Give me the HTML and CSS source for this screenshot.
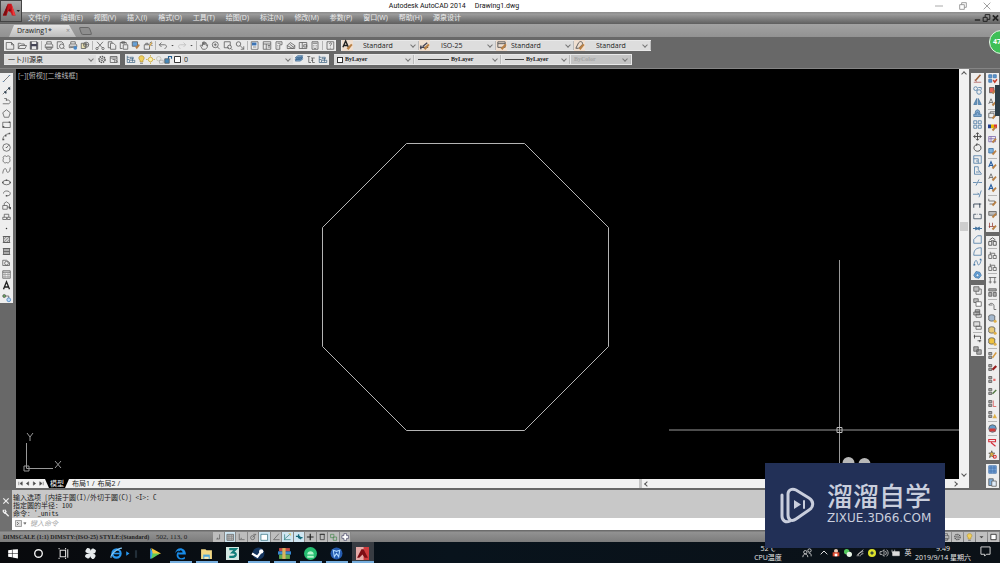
FILE: index.html
```html
<!DOCTYPE html>
<html lang="zh-CN">
<head>
<meta charset="utf-8">
<meta name="viewport" content="width=device-width, initial-scale=1">
<title>Autodesk AutoCAD 2014 Drawing1.dwg</title>
<link rel="stylesheet" href="styles.css">
</head>
<body>
<header class="titlebar">
  <h1 class="title"><span>Autodesk AutoCAD 2014</span><span>Drawing1.dwg</span></h1>
  <div class="window-controls" data-tools="winmin winrestore winclose"></div>
</header>
<button class="app-button" aria-label="应用程序菜单">
  <svg viewBox="0 0 22 22"><path d="M2 16 7.500 3h4L16 16h-4l-1-3-3-2-2 5z" fill="#c4161c"/><path d="M7.500 3 6 16H2zM10 8l1 3H8z" fill="#7e0c10"/><path d="m11.500 3 4.500 13-3-1z" fill="#ee3a3a"/><path d="M17 10h4l-2 2z" fill="#222"/></svg>
</button>
<nav class="menubar">
  <button>文件(F)</button><button>编辑(E)</button><button>视图(V)</button><button>插入(I)</button><button>格式(O)</button><button>工具(T)</button><button>绘图(D)</button><button>标注(N)</button><button>修改(M)</button><button>参数(P)</button><button>窗口(W)</button><button>帮助(H)</button><button>源泉设计</button>
  <div class="mdi-controls" data-tools="mdimin mdirestore mdiclose"></div>
</nav>
<div class="tabbar">
  <div class="doc-tab"><span>Drawing1*</span><button aria-label="关闭">×</button></div>
  <button class="new-tab" aria-label="新建选项卡"></button>
</div>
<div class="toolbars">
  <div class="toolbar-row">
    <div class="toolbar" data-tools="new open save | print preview publish web | cut copy paste match block | undo caret redo caret | pan zoom zoomwin zoomprev | props center palette sheet markup calc | help"></div>
    <div class="toolbar styles">
      <span class="style-icon" data-icon="textstyle"></span>
      <label class="pick w-text"><select aria-label="文字样式"><option>Standard</option></select></label>
      <span class="style-icon" data-icon="dimstyle"></span>
      <label class="pick w-dim"><select aria-label="标注样式"><option>ISO-25</option></select></label>
      <span class="style-icon" data-icon="tablestyle"></span>
      <label class="pick w-table"><select aria-label="表格样式"><option>Standard</option></select></label>
      <span class="style-icon" data-icon="leaderstyle"></span>
      <label class="pick w-leader"><select aria-label="多重引线样式"><option>Standard</option></select></label>
    </div>
  </div>
  <div class="toolbar-row">
    <div class="toolbar workspace">
      <label class="pick w-space"><select aria-label="工作空间"><option>一卜川源泉</option></select></label>
      <span class="tools" data-tools="gear wsave"></span>
    </div>
    <div class="toolbar layers">
      <span class="tools" data-tools="layers"></span>
      <span class="layer-state" data-tools="bulb sun freeze lock white"></span>
      <label class="pick w-layer"><select aria-label="图层"><option>0</option></select></label>
      <span class="tools" data-tools="stack layerprev layers"></span>
    </div>
    <div class="toolbar properties">
      <label class="pick serif w-color"><i class="swatch"></i><select aria-label="颜色"><option>ByLayer</option></select></label>
      <label class="pick serif w-line"><i class="rule long"></i><select aria-label="线型"><option>ByLayer</option></select></label>
      <label class="pick serif w-weight"><i class="rule"></i><select aria-label="线宽"><option>ByLayer</option></select></label>
      <label class="pick serif w-plot"><select aria-label="打印样式" disabled><option>ByColor</option></select></label>
    </div>
  </div>
</div>
<main class="workspace-area">
  <aside class="dock dock-left">
    <div class="palette draw" data-tools="line xline pline polygon rect arc circle cloud spline ellipse earc insert mkblock point hatch gradient region table text addsel"></div>
  </aside>
  <section class="view">
    <div class="view-top">
      <div class="canvas">
        <div class="view-label">[−][俯视][二维线框]</div>
        <svg class="drawing" viewBox="0 0 943 409" preserveAspectRatio="xMinYMin meet" aria-label="八边形">
          <g fill="none" stroke="#c8c8c8">
            <path d="M390.500 74.500h118l84 84v119l-84 84h-118l-84-84v-119z" stroke-width=".9"/>
            <path d="M823.500 191v218M653 361h290" stroke="#999"/>
            <path d="M821 358.500h5v5h-5z" stroke="#bbb"/>
            <path d="M10.500 374v25.500H37M8 397h5v5H8zM11 364l3 4 3-4M14 368v4M39 392l6 7M45 392l-6 7" stroke="#999"/>
          </g>
          <circle cx="832.500" cy="394" r="6" fill="#b8b8b8"/><circle cx="848.500" cy="395" r="6" fill="#b8b8b8"/>
        </svg>
      </div>
      <div class="vscroll"><button aria-label="向上" class="arrow up"></button><i class="thumb"></i><button aria-label="向下" class="arrow down"></button></div>
    </div>
    <div class="layout-row">
      <div class="layout-nav" data-tools="first prev next last"></div>
      <button class="layout-tab active">模型</button><button class="layout-tab">布局1</button><button class="layout-tab">布局2</button>
      <div class="hscroll"><button aria-label="向左" class="arrow left"></button><button aria-label="向右" class="arrow right"></button></div>
    </div>
  </section>
  <aside class="dock dock-right">
    <div class="dock-col">
      <div class="palette modify" data-tools="erase copyobj mirror offset array move rotate scale stretch trim extend breakpt break join chamfer fillet blend explode"></div>
      <div class="palette order" data-tools="front back above under | textfront hatchback"></div>
    </div>
    <div class="dock-col">
      <div class="palette express" data-tools="bluegrid redtool abrush | boxbrush colorbar gridbrush bluebrush | abluebrush abrush abluebrush | keybrush greybrush redbrush"></div>
      <div class="palette refs" data-tools="dimbox | dimtree dimtree | dimrow dimlist | leader disk yellowdisk yellowball | pencil redpen reddot greenpen redpair warn | globe | redmark star"></div>
      <div class="palette grids" data-tools="bluetable pages"></div>
    </div>
    <div class="side-handle"></div>
  </aside>
</main>
<section class="command">
  <div class="command-side" data-tools="cmdclose wrench"></div>
  <div class="command-body">
    <div class="history"><p>输入选项 [内接于圆(I)/外切于圆(C)] &lt;I&gt;: C</p><p>指定圆的半径: 100</p><p>命令: '_units</p></div>
    <label class="prompt"><span data-icon="prompt"></span><input type="text" placeholder="键入命令" aria-label="命令"></label>
  </div>
</section>
<div class="statusbar">
  <span class="dims">DIMSCALE (1:1) DIMSTY:(ISO-25) STYLE:(Standard)</span>
  <span class="coords">502, 113, 0</span>
  <div class="toggles" data-tools="infer snap! grid ortho polar! angle track! dyn! plus lwt quick add"></div>
  <div class="status-right" data-tools="printer gear bulb caret white"></div>
</div>
<footer class="taskbar">
  <nav class="apps" data-tools="windows cortana taskview fan ie video edge folder max steam winrar android wps acad"></nav>
  <div class="tray">
    <div class="stack temp"><span>52℃</span><span>CPU温度</span></div>
    <div class="tray-icons" data-tools="people up redman wechat wifi nod speaker battery"></div>
    <span class="ime">英</span>
    <div class="stack clock"><span>9:49</span><span>2019/9/14 星期六</span></div>
    <div class="notice" data-tools="note"></div>
  </div>
</footer>
<button class="bubble" aria-label="加速球">47</button>
<div class="watermark">
  <svg viewBox="0 0 36 38" fill="none" stroke="#c9cedd" stroke-width="3" stroke-linecap="round"><path d="M3 8v21c0 5 4 7 8 5"/><path d="M9 7c0-4 4-6 8-4l13 8c5 3 5 9 0 12L17 32c-4 3-8 1-8-4z"/><path d="m15 13 7 4.500-7 4.500z" fill="#c9cedd" stroke="none"/><path d="M25 14v7" stroke-width="2"/></svg>
  <div class="brand"><strong>溜溜自学</strong><span>ZIXUE.3D66.COM</span></div>
</div>
<script src="app.js"></script>
</body>
</html>
```

FILE: styles.css
```css
* { box-sizing: border-box; }
body { margin: 0; min-height: 100vh; display: flex; flex-direction: column; position: relative; overflow: hidden; background: #686868; color: #222; font: 7px/10px "Open Sans", "Noto Sans CJK SC", sans-serif; }
button, input, select { font: inherit; color: inherit; margin: 0; padding: 0; border: 0; background: none; }
button svg, span svg { display: block; width: 100%; height: 100%; }
svg { overflow: visible; }
h1, p { margin: 0; font: inherit; }

.titlebar { display: flex; height: 12px; background: #fff; align-items: center; }
.title { flex: 1; display: flex; justify-content: center; gap: 9px; color: #111; font-family: Roboto, sans-serif; }
.window-controls { display: flex; width: 92px; padding: 0 1px 0 19px; }
.window-controls button { flex: 1; height: 10px; padding: 1px 8px; }
.app-button { position: absolute; left: 0; top: 0; width: 22px; height: 22px; background: linear-gradient(#a8a8a8, #777); border: 1px solid #444; z-index: 2; }

.menubar { display: flex; height: 12px; padding-left: 28px; gap: 11px; align-items: center; background: linear-gradient(#8c8c8c, #9a9a9a 20%, #5e5e5e); color: #eee; }
.menubar > button { white-space: nowrap; }
.mdi-controls { display: flex; margin-left: auto; }
.mdi-controls button { width: 9px; height: 8px; }

.tabbar { display: flex; height: 13px; padding-left: 9px; gap: 4px; background: linear-gradient(#a2a2a2, #929292); align-items: flex-end; }
.doc-tab { display: flex; width: 67px; height: 12px; padding: 0 6px 0 8px; justify-content: space-between; align-items: center; background: linear-gradient(#e4e4e4, #bcbcbc); clip-path: polygon(5px 0, 60px 0, 100% 100%, 0 100%); }
.doc-tab button { color: #888; }
.new-tab { width: 11px; height: 8px; margin-bottom: 2px; border: 1px solid #666; background: #8e8e8e; transform: skewX(20deg); border-radius: 2px; }

.toolbars { display: flex; flex-direction: column; gap: 3px; padding: 3px 4px; height: 32px; border-bottom: 1px solid #858585; }
.toolbar-row { display: flex; gap: 5px; }
.toolbar { display: flex; height: 11px; align-items: center; background: #e9e9e9; }
.toolbar button { width: 12px; height: 11px; padding: 1px; flex: none; }
.toolbar .caret { width: 7px; }
.sep { flex: none; width: 1px; height: 9px; margin: 0 1px; background: #b5b5b5; }
.tools, .layer-state { display: flex; }
.layer-state button { width: 9px; padding: 1px 0; }
.styles { padding-left: 1px; }
.style-icon { width: 11px; height: 11px; flex: none; background: #f0dfd0; }
.pick { display: flex; align-items: center; position: relative; height: 9px; background: #ddd; }
.pick select { appearance: none; flex: 1; min-width: 0; height: 9px; line-height: 9px; }
.pick::after { content: ""; position: absolute; right: 3px; top: 2px; width: 3px; height: 3px; border: solid #777; border-width: 0 1px 1px 0; transform: rotate(45deg); }
.styles .pick { border-right: 1px solid #bbb; }
.w-text { width: 66px; padding-left: 10px; }
.w-dim { width: 66px; padding-left: 11px; }
.w-table { width: 67px; padding-left: 4px; }
.w-leader { width: 66px; padding-left: 11px; }
.workspace { width: 116px; }
.w-space { flex: 1; padding-left: 4px; }
.layers { width: 204px; }
.w-layer { flex: 1; padding-left: 2px; }
.properties { width: 298px; }
.serif { font: bold 6px/9px "Liberation Serif", serif; gap: 2px; padding-left: 3px; margin-right: 1px; border-right: 1px solid #bbb; }
.w-color { width: 80px; } .w-line { width: 86px; } .w-weight { width: 68px; }
.w-plot { flex: 1; background: #c4c4c4; color: #999; }
.swatch { flex: none; width: 6px; height: 6px; border: 1px solid #333; background: #fff; }
.rule { flex: none; width: 19px; height: 1px; background: #444; }
.rule.long { width: 31px; }

.workspace-area { flex: 1; display: flex; min-height: 0; }
.dock { padding-top: 4px; background: #686868; }
.dock-left { width: 16px; padding-right: 3px; }
.palette { display: flex; flex-direction: column; justify-content: space-between; background: #eee; }
.palette button { height: 11px; padding: 1px; flex: none; }
.palette .sep { width: 9px; height: 1px; margin: 0 auto; }
.draw { height: 230px; }
.view { flex: 1; display: flex; flex-direction: column; min-width: 0; }
.view-top { flex: 1; display: flex; min-height: 0; }
.canvas { flex: 1; position: relative; background: #000; overflow: hidden; }
.view-label { padding: 2px; color: #bbb; }
.drawing { position: absolute; inset: 0; width: 100%; height: 100%; }
.vscroll { width: 10px; display: grid; grid-template-rows: 10px 3fr 9px 5fr 10px; justify-items: center; background: #f1f1f1; }
.thumb { grid-row: 3; width: 8px; background: #cdcdcd; }
.arrow { width: 9px; height: 10px; display: grid; place-items: center; }
.arrow::before { content: ""; width: 3px; height: 3px; border: solid #555; border-width: 1px 0 0 1px; transform: rotate(45deg); }
.down { grid-row: 5; }
.down::before { transform: rotate(225deg); }
.left::before { transform: rotate(-45deg); }
.right::before { transform: rotate(135deg); }
.layout-row { display: flex; height: 9px; background: #f1f1f1; line-height: 9px; align-items: center; }
.layout-nav { display: flex; padding-left: 1px; width: 29px; }
.layout-nav button { flex: 1; height: 7px; }
.layout-tab { height: 9px; padding-left: 3px; color: #222; white-space: nowrap; }
.layout-tab::after { content: "/"; padding-left: 2px; }
.layout-tab.active { padding: 0 5px; background: #000; color: #eee; clip-path: polygon(0 0, 100% 0, 20px 100%, 4px 100%); }
.layout-tab.active::after { content: none; }
.hscroll { width: 34.600%; height: 9px; margin-left: auto; padding-right: 10px; display: flex; align-items: center; justify-content: space-between; border-left: 3px solid #c5c5c5; }
.dock-right { width: 31px; padding-left: 2px; display: flex; gap: 2px; position: relative; }
.dock-col { display: flex; flex-direction: column; width: 13px; gap: 4px; }
.modify { height: 207px; }
.order { height: 71px; margin-top: 1px; }
.express { height: 159px; }
.refs { height: 224px; }
.grids { height: 24px; }
.side-handle { position: absolute; right: 0; top: 16px; width: 5px; height: 31px; background: #2c3d48; }

.command { display: flex; margin-top: 2px; background: #c8c8c8; }
.command-side { width: 12px; padding: 7px 2px 5px; display: flex; flex-direction: column; gap: 4px; background: #707070; }
.command-side button { height: 8px; }
.command-body { flex: 1; }
.history { padding: 3px 1px 1px; height: 28px; font: 7px/8px "Noto Sans Mono CJK SC", "Liberation Mono", "Noto Sans CJK SC", monospace; }
.prompt { display: flex; height: 12px; padding: 1px 2px; gap: 4px; background: #fff; }
.prompt span { width: 12px; height: 9px; }
.prompt input { flex: 1; height: 10px; font-style: italic; outline: 0; }
.prompt input::placeholder { color: #aaa; }
.statusbar { display: flex; height: 12px; padding: 1px 0 0 3px; align-items: center; background: linear-gradient(#6c6c6c 1px, #929292 2px, #7c7c7c); font: bold 6px/10px "Liberation Serif", serif; }
.dims { width: 153px; white-space: nowrap; }
.coords { width: 57px; font-size: 7px; font-weight: normal; }
.toggles { display: flex; width: 138px; }
.toggles button { flex: 1; height: 10px; padding: 1px; background: #bdbdbd; border-right: 1px solid #888; }
.toggles button.on { background: #cfe6f2; }
.status-right { display: flex; margin-left: auto; gap: 1px; padding-right: 1px; }
.status-right button { width: 11px; height: 10px; padding: 1px; background: #c0c0c0; }

.taskbar { display: flex; height: 21px; background: linear-gradient(90deg, #08090c, #08131c 45%, #0b1117); color: #e6e6e6; }
.apps { display: flex; }
.apps button { width: 26px; padding: 4px 6px 0; border-bottom: 2px solid transparent; }
.apps button svg { height: 13px; width: 13px; }
.apps .ie { width: 38px; text-align: left; }
.apps .edge, .apps .folder, .apps .steam, .apps .winrar, .apps .android, .apps .wps, .apps .acad { width: 22px; margin: 0 2px; padding: 4px 4px 0; border-bottom-color: #76aede; }
.apps .acad { background-color: #383c42; }
.tray { display: flex; margin-left: auto; align-items: center; }
.stack { display: flex; flex-direction: column; align-items: center; line-height: 9px; white-space: nowrap; padding-top: 1px; }
.temp { width: 36px; }
.tray-icons { display: flex; padding-left: 10px; }
.tray-icons button { width: 12px; height: 10px; padding: 1px 2px; }
.tray-icons .people { width: 22px; padding: 0 5px; }
.ime { width: 12px; text-align: center; }
.clock { width: 58px; }
.notice { width: 28px; padding: 0 8px; }
.notice button { width: 11px; height: 11px; }

.bubble { position: absolute; right: -13px; top: 30px; width: 24px; height: 24px; border: 1px solid #e8f6e8; border-radius: 50%; background: #3fbf58; color: #fff; font: bold 7px/20px "Open Sans", sans-serif; text-align: left; padding-left: 3px; }
.watermark { position: absolute; right: 55px; bottom: 15px; width: 180px; height: 85px; padding-left: 14px; display: flex; align-items: center; gap: 12px; background: #223057; color: #c9cedd; z-index: 3; }
.watermark svg { width: 36px; height: 38px; }
.brand { padding-bottom: 5px; }
.brand strong { display: block; margin-bottom: 4px; font: 500 26px/26px "Noto Sans CJK SC", sans-serif; }
.brand span { display: block; font: 12px/12px "DejaVu Sans", sans-serif; }
```

FILE: app.js
```js
// Icon shapes on a 12 x 12 grid, keyed by tool name.
const brush = '<path d="m5 9 5-5 1.500 1.500L7 11z" fill="#b98045" stroke="none"/>';
const blueSq = '<path d="M1 2h6v6H1z" fill="#7db0dc" stroke="#38699c"/>';
const letterA = '<path d="m1 8 3-7 3 7M2 6h4"/>';
const pair = '<path d="M1 2h4v3H1zM1 7h4v3H1z" fill="#aaa"/>';
const tree = '<path d="M3 1v4M3 3h6v3M1 5h4v5H1zM7 6h4v4H7z"/>';
const disk = c => `<ellipse cx="5" cy="3" rx="4" ry="2" fill="${c}"/><path d="M1 3v5c1 2 7 2 8 0V3" fill="${c}"/><circle cx="9.500" cy="9.500" r="2" fill="#dfb048" stroke="none"/>`;
const icons = {
  winmin: '<path d="M0 6h12" stroke="#aaa" stroke-width="1.500"/>',
  winrestore: '<path d="M1 4h7v7H1zM4 4V1h7v7H8" stroke="#888" stroke-width="1.200"/>',
  winclose: '<path d="m1 1 10 10M11 1 1 11" stroke="#888" stroke-width="1.200"/>',
  mdimin: '<path d="M2 9h8" stroke="#222" stroke-width="2"/>',
  mdirestore: '<path d="M1 5h6v6H1zM4 5V1h7v7H7" stroke="#222" stroke-width="1.500"/>',
  mdiclose: '<path d="m2 2 8 8M10 2l-8 8" stroke="#222" stroke-width="2.500"/>',
  new: '<path d="M1 2h7l3 3v6H1zM8 2v3h3"/>',
  open: '<path d="M1 10V3h3l1 1h4v2M1 10l2-4h9l-2 4z"/>',
  save: '<path d="M1 1h9l1 1v9H1z" fill="#445"/><path d="M3 1h6v3H3zM3 7h6v4H3z" fill="#e8e8e8" stroke="none"/>',
  print: '<path d="M3 4V1h6v3M1 9V5l2-1h6l2 1v4zM2 8h8M3 9v2h6V9"/>',
  preview: '<path d="M3 10H1V1h6l2 2v2"/><circle cx="7" cy="7" r="3"/><path d="m9 9 2 2"/>',
  publish: '<path d="M3 4V1h6v3M1 9V5l2-1h6l2 1v3zM2 7h8"/><circle cx="9" cy="9" r="2.500" fill="#4a89c8" stroke="none"/>',
  web: '<path d="M1 3h6v7H1z" fill="#ebe2b2"/><circle cx="7.500" cy="5" r="3.500"/><path d="M4 5h7M7.500 2v6"/>',
  cut: '<path d="m2 1 7 8M10 1 3 9"/><circle cx="2" cy="10" r="1.500"/><circle cx="10" cy="10" r="1.500"/>',
  copy: '<path d="M4 9H1V1h5v2M4 3h4l3 3v5H4z"/>',
  paste: '<path d="M4 10H1V2h8v2M3 1h4v2H3zM5 5h6v6H5z"/>',
  match: '<path d="M1 1h7v6H1z" fill="#67a0d5"/><path d="m5 8 5-4 1 2-4 5z" fill="#b98045" stroke="none"/>',
  block: '<path d="M1 5h7v6H1zM3 5V3h3v2M8 3l3-2M9 5l3 1M10 3h2"/><path d="m8 7 3-5" stroke="#daa640" stroke-width="1.500"/>',
  undo: '<path d="M4 2 1 5l3 3M1 5h7c3 0 4 4 0 5"/>',
  redo: '<path d="m8 2 3 3-3 3M11 5H4C1 5 0 9 4 10" stroke="#bbb"/>',
  caret: '<path d="M3 5h6L6 8z" fill="#444" stroke="none"/>',
  pan: '<path d="M4 11 1 6l1-1 2 2V2l1-1v4l1-4 1 .500V5l1-3 1 .500V6l2-1-1 4-2 2z"/>',
  zoom: '<circle cx="5" cy="5" r="4"/><path d="m8 8 3 3M3 5h4M5 3v4"/>',
  zoomwin: '<path d="M7 9H1V1h8v5"/><circle cx="8" cy="8" r="2.500"/><path d="m10 10 2 2"/>',
  zoomprev: '<circle cx="4" cy="4" r="3"/><path d="m6 6 5 5M11 7v4H7"/>',
  props: '<path d="M1 1h9v10H1z" fill="#fff"/><path d="M2 2h6v4H2z" fill="#3c74b5" stroke="none"/><path d="M3 8h5"/>',
  center: '<path d="M1 1h10v10H1zM1 4h10M5 4v7M7 6h3M7 8h3"/>',
  palette: '<path d="M2 1h8v4H7v6H2zM4 3h4M4 6h1M4 8h1"/>',
  sheet: '<path d="m1 6 4-4 6 4-3 4zM1 6v4h10V6M4 4l5 4"/>',
  markup: '<path d="M1 2h10v8H1zM5 2v8M7 5h4v3H7z"/>',
  calc: '<path d="M2 1h8v10H2zM3 3h6M4 6h1M7 6h1M4 8h1M7 8h1M5 10h2"/>',
  help: '<path d="M2 1h9v10H2zM5 4c0-2 4-2 3 0L6.500 6v1M6.500 9v1"/>',
  textstyle: letterA.replace('/>', ' stroke="#222" stroke-width="1.500"/>') + brush,
  dimstyle: '<path d="M1 8h9M2 6v4M9 3 4 7" stroke="#445" stroke-width="1.500"/>' + brush,
  tablestyle: '<path d="M2 2h8v6H2zM2 4h8"/>' + brush,
  leaderstyle: '<path d="m2 9 3-6c3-3 5 0 4 2L5 9H2"/>' + brush,
  gear: '<circle cx="6" cy="6" r="4" stroke-dasharray="2 1" stroke-width="2"/><circle cx="6" cy="6" r="1.500"/>',
  wsave: '<path d="M1 2h9v8H1zM1 4h9M4 6h3v4M8 6l3 4"/>',
  layers: '<path d="M1 1v9h3M1 3h3M1 6h3M5 3h4v2H5zM4 7h7v3H4zM8 4v5" stroke="#466987"/>',
  bulb: '<path d="M4 7C1 4 3 1 6 1s5 3 2 6v2H4z" fill="#f0cf5d" stroke="#b59430"/><path d="M4 11h4"/>',
  sun: '<circle cx="6" cy="6" r="3" fill="#fff2a5" stroke="#c7a334"/><path d="M6 0v2M6 10v2M0 6h2M10 6h2" stroke="#c7a334"/>',
  freeze: '<circle cx="5" cy="5" r="3" stroke="#bba"/><path d="M6 7h5v4H6z" stroke="#aaa"/>',
  lock: '<path d="M1 5h6v6H1z" fill="#4689ba"/><path d="M6 5V2h4v3" stroke="#245f91" stroke-width="1.500"/>',
  white: '<path d="M2 2h8v8H2z" fill="#fff" stroke="#222" stroke-width="1.200"/>',
  stack: '<path d="m1 8 3-3h7L8 8zM1 6l3-3h7L8 6zM1 4l3-3h7L8 4z" fill="#91b6d8" stroke="#315f89"/>',
  layerprev: '<path d="M1 2h4M3 2v8h3M6 4h5M8 4v6h3M6 7h3"/>',
  line: '<path d="m2 10 8-8"/><path d="M1 10h2M9 2h2" stroke="#4a78a8"/>',
  xline: '<path d="m1 11 10-10"/><path d="M3 8h2v2M8 3h2v2" stroke="#345" stroke-width="2"/>',
  pline: '<path d="M1 9h8c3-1 2-5-1-5H5M3 2h3v3"/>',
  polygon: '<path d="m6 1 5 4-2 6H3L1 5z"/>', rect: '<path d="M1 3h10v7H1z"/><path d="M1 9h2M9 3h2" stroke-width="2"/>',
  arc: '<path d="M1 11c0-5 3-8 9-9"/><path d="M1 10h2M9 2h2M4 5h2" stroke-width="2"/>',
  circle: '<circle cx="6" cy="6" r="5"/><path d="m6 6 3-3M5 6h2"/>',
  cloud: '<path d="M2 5c-2-3 2-5 4-3 3-2 6 0 4 3 2 3-1 7-4 5-3 2-6-2-4-5z"/>',
  spline: '<path d="M1 10C2 1 6 3 6 6s4 5 5-4"/>', ellipse: '<ellipse cx="6" cy="6" rx="5" ry="3"/><path d="M5 3h2M1 5v2M11 5v2" stroke-width="2"/>',
  earc: '<path d="M2 6c0-5 9-4 9 0 0 3-3 3-5 3"/><path d="M5 9h2" stroke-width="2"/>',
  insert: '<path d="M1 6h6v5H1zM3 6V3l3-2 4 3v4H7"/><path d="M9 9h2v2" stroke-width="2"/>',
  mkblock: '<path d="M1 7h5v3H1zM3 7V3h6v4M7 7h4v3H7z"/>', point: '<circle cx="6" cy="6" r="1" fill="#333" stroke="none"/>',
  hatch: '<path d="M2 2h8v8H2z" fill="#ccc"/><path d="M2 6l4-4M2 10l8-8M6 10l4-4" stroke="#888"/><path d="M1 2h10M1 10h10"/>',
  gradient: '<path d="M2 2h8v8H2z" fill="#aaa"/><path d="M1 2h10M1 10h10M2 6h8"/>',
  region: '<path d="M1 3h5l4 3v4H1z"/><circle cx="6" cy="7" r="2.500"/>', table: '<path d="M1 1h10v10H1zM1 3h10"/><path d="M1 6h10M1 9h10M4 3v8M8 3v8" stroke="#999"/>',
  text: '<path d="M2 11 6 1l4 10M3.500 8h5" stroke="#222" stroke-width="1.800"/>',
  addsel: '<circle cx="3" cy="4" r="2" fill="#67a85b"/><path d="M5 4h4v3"/><circle cx="9" cy="9" r="2.500" fill="#bcd9f5" stroke="#3f7fbd"/>',
  erase: '<path d="m3 9 7-8" stroke="#9c6139" stroke-width="2"/><path d="M1 11h10M2 8l3 2" stroke="#a55"/>',
  copyobj: '<circle cx="3.500" cy="3.500" r="2.500"/><circle cx="8" cy="8" r="3"/><path d="M7 2h4v3"/>',
  mirror: '<path d="M5 2v8H1zM7 2v8h4z" fill="#6695bd"/>',
  offset: '<path d="M1 10V7h2c-1-8 7-8 6 0h2v3zM4 8c0-5 4-5 4 0" fill="#86abd0"/>',
  array: '<path d="M1 1h4v4H1zM7 1h4v4H7zM1 7h4v4H1zM7 7h4v4H7z"/>',
  move: '<path d="M6 1v10M1 6h10M4 3l2-2 2 2M4 9l2 2 2-2M3 4 1 6l2 2M9 4l2 2-2 2" stroke="#444" stroke-width="1.200"/>',
  rotate: '<path d="M5 2c-6 2-4 9 1 9 6 0 6-8 1-9L5 1v3" stroke="#444" stroke-width="1.200"/>',
  scale: '<path d="M1 1h10v10H1zM1 5h6v6M4 8h3"/>', stretch: '<path d="M2 11V1h5v4l4 5v1zM4 8h5"/>',
  trim: '<path d="M0 6h5M7 6h5M4 10l4-8"/>', extend: '<path d="M0 7h8M6 5l2 2M8 11l3-9"/>',
  breakpt: '<path d="M1 9V4h8v5M8 4h3" stroke="#345" stroke-width="1.200"/>', break: '<path d="M4 3H1v6h10V3H8M5 3h1" stroke="#345"/>',
  join: '<path d="M0 6h12M3 4l3 2-3 2M9 4 6 6l3 2" stroke-width="1.400"/>', chamfer: '<path d="M1 11V6l5-5h5v10z"/>',
  fillet: '<path d="M1 11C1 4 4 1 11 1v10z"/>', blend: '<path d="M1 10C3 1 5 2 6 7s4 1 5-5"/><path d="M1 9h2M9 2h2" stroke-width="2"/>',
  explode: '<path d="m1 7 3-5 5 1 2 4-3 4-5-1z" fill="#68a6df"/><circle cx="6" cy="7" r="2" fill="#e4f2ff"/>',
  front: '<path d="M4 4h7v7H4z"/><path d="M1 1h7v6H1z" fill="#bbb"/>', back: '<path d="M1 1h6v5H1z" fill="#bbb"/><path d="M4 5h7v6H4z" fill="#fff"/>',
  above: '<path d="M3 1h6v3H3zM1 4h8v4H1z" fill="#bbb"/><path d="M4 7h7v4H4z"/>', under: '<path d="M1 1h8v6H1z" fill="#ddd"/><path d="M4 7h7v4H4z"/>',
  textfront: '<path d="M1 3h9v4M2 1v5M9 8v3M6 9h5" stroke="#333"/>', hatchback: '<path d="M1 1h6v6H1zM5 5h6v6H5z" fill="#aaa"/>',
  bluegrid: '<path d="M1 1h4v4H1zM7 1h4v4H7zM1 7h4v4H1z" fill="#5b97d1" stroke="#3d70a8"/><path d="m7 8 2 3 3-4" stroke="#c73d2e" stroke-width="2"/>',
  redtool: '<path d="M2 2h6v7H2z" fill="#e4645a"/>' + brush, abrush: letterA + brush, boxbrush: '<path d="M1 3h7v6H1zM3 3V1h7v6"/>' + brush,
  colorbar: '<path d="M0 2h4v5H0z" fill="#243f91" stroke="none"/><path d="M4 2h4v5H4z" fill="#e2b700" stroke="none"/><path d="M8 2h4v5H8z" fill="#d33" stroke="none"/>' + brush,
  gridbrush: '<path d="M1 2h9v7H1zM1 5h9M4 2v7" stroke="#755faa"/>' + brush, bluebrush: blueSq + brush, abluebrush: letterA.replace('/>', ' stroke="#285ea0" stroke-width="1.500"/>') + brush,
  keybrush: '<path d="M1 1v3h8v4H2"/>' + brush, greybrush: '<path d="M1 2h10v5H1z" fill="#bbb"/>' + brush, redbrush: '<path d="M2 1v7M1 6h9M6 1v5" stroke="#943e35"/>' + brush,
  dimbox: '<path d="M1 6h4v5H1zM7 6h4v5H7zM2 4l4-3 4 3M4 5h5" stroke-width="1.200"/>', dimtree: tree,
  dimrow: '<path d="M1 2h10M3 2v8M9 2v8M1 8h4M7 8h4"/>', dimlist: '<path d="M1 1h10v3H1zM1 6h4v5H1zM7 6h4v5H7z" fill="#aaa"/>',
  leader: '<path d="M1 4c2-4 7-2 7 1v5h3M1 4h5"/>', disk: disk('#a5b9ce'), yellowdisk: disk('#e7ca79'), yellowball: disk('#efc342'),
  pencil: pair + '<path d="m6 9 5-7" stroke="#d59c43" stroke-width="2"/>', redpen: pair + '<path d="m6 9 5-5" stroke="#972020" stroke-width="3"/>',
  reddot: pair + '<path d="M7 5h3v3H7z" fill="#e56b6b" stroke="none"/>', greenpen: pair + '<path d="m6 9 5-5" stroke="#517741" stroke-width="2"/>',
  redpair: pair + '<path d="M7 2v8h4" stroke="#d74a4a"/>', warn: pair + '<path d="m9 5 3 6H6z" fill="#dfb14a" stroke="none"/>',
  globe: '<circle cx="6" cy="6" r="5" fill="#649ac8"/><path d="M2 6h8v4H2z" fill="#d23b38" stroke="none"/>',
  redmark: '<path d="M1 2h9v3H1zM4 6l6 5" stroke="#d42d39" stroke-width="1.500"/>', star: '<path d="m5 1 1 3h3L7 6l1 4-3-2-3 2 1-4-2-2h3z" fill="#deb044"/><circle cx="9" cy="9" r="2" stroke="#d33" stroke-width="1.500"/>',
  bluetable: '<path d="M1 1h10v10H1zM1 4h10M1 8h10M4 1v10M8 1v10" fill="#78a6db" stroke="#426fa9"/>', pages: '<path d="M1 1h6v9H1z" fill="#7eabd7"/><path d="M5 4h6v7H5z" fill="#e1ecf8"/>',
  first: '<path d="M3 3v6M9 3 5 6l4 3z" fill="#444"/>', prev: '<path d="M8 3 4 6l4 3z" fill="#444"/>', next: '<path d="m4 3 4 3-4 3z" fill="#444"/>', last: '<path d="m3 3 4 3-4 3zM9 3v6" fill="#444"/>',
  cmdclose: '<path d="m2 2 8 8M10 2l-8 8" stroke="#eee" stroke-width="1.800"/>', wrench: '<path d="m4 5 6 6M2 1v3l2 2 2-2-2-3" stroke="#eee" stroke-width="2"/>',
  prompt: '<path d="M0 2h8v8H0z" fill="#ddd" stroke="#888"/><path d="m2 4 2 2-2 2M11 5h3l-1.500 2z"/>',
  infer: '<path d="M8 2v7H3M5 7v2"/>', snap: '<path d="M1 2h10v9H1z" fill="#bbb"/><path d="M1 5h10M1 8h10M4 2v9M8 2v9" stroke="#888"/>', grid: '<path d="M3 1v9h8M5 8h2"/>', ortho: '<circle cx="5" cy="7" r="3"/><path d="m5 7 5-5H6"/>',
  polar: '<path d="M1 2h10v9H1z" fill="#fff" stroke="#267"/>', angle: '<path d="M10 1 2 10h9"/>', track: '<path d="M1 10h10M2 9l8-7M2 2v8" stroke="#277"/><path d="M8 1h3v3" stroke="#db4"/>', dyn: '<path d="M1 5h5l2 2h3M5 2v5l4 2" stroke="#176b7c" stroke-width="2"/>',
  plus: '<path d="M6 1v10M1 6h10" stroke="#222" stroke-width="1.800"/>', lwt: '<path d="M3 2h6v8H3zM2 2h8" stroke="#222"/>', quick: '<path d="M2 2h5v5H2zM6 6h5v5H6z" stroke="#46864b"/>', add: '<path d="M4 1h4v3h3v4H8v3H4V8H1V4h3z" fill="#fff" stroke="#446"/>',
  printer: '<path d="M3 4V1h6v3M1 4h10v5H1zM3 8h6v3H3z"/>',
  windows: '<path d="m2 3 3.500-.5v3H2zM6 2.400 11 2v3.500H6zM2 6h3.500v3.500L2 9zM6 6h5v4.500L6 9.800z" fill="#fff" stroke="none"/>',
  cortana: '<circle cx="6" cy="6" r="3.500" stroke="#eee" stroke-width="1.300"/>', taskview: '<path d="M2 3h5v6H2zM9 2v8M1 1v1M7 1v1M1 11v-1M7 11v-1" stroke="#ddd"/>',
  fan: '<path d="M6 6C1 6 0 4 3 1c2 0 4 1 3 5 0-5 2-6 5-3 0 2-1 4-5 3 5 0 6 2 3 5-2 0-4-1-3-5 0 5-2 6-5 3 0-2 1-3 5-3z" fill="#e6eaec" stroke="none"/>',
  ie: '<circle cx="6" cy="6" r="3.800" stroke="#2998ef" stroke-width="2"/><path d="M3 6h7" stroke="#2998ef" stroke-width="1.500"/><path d="M1 10c-1-3 6-9 10-9" stroke="#8acbf7"/><path d="m15 4 3 2-3 2z" fill="#2998ef" stroke="none"/><path d="M24 3v7" stroke="#222e38" stroke-width="2"/>',
  video: '<path d="M2 1v10l5-3z" fill="#38a5ef" stroke="none"/><path d="m3 1 9 5-7 2z" fill="#f6c83d" stroke="none"/><path d="m4 6 7 0-8 5z" fill="#60cb57" stroke="none"/>',
  edge: '<path d="M1 6c1-7 10-6 10 1H4c0 4 4 4 6 2v2C1 14 0 4 7 3c-3 0-5 1-6 3zm3-1h4c-1-3-4-2-4 0z" fill="#188be8" stroke="none"/>',
  folder: '<path d="M1 2h4l1 1h5v8H1z" fill="#f1d886" stroke="none"/><path d="M3 7h6v4H3z" fill="#4ca6dd" stroke="none"/><path d="M4 9h4v2H4z" fill="#f8eab4" stroke="none"/>',
  max: '<path d="M0 0h12v12H0z" fill="#d3e8e3" stroke="none"/><path d="M3 2h6L6 5c5 0 4 5-3 4" stroke="#117e7b" stroke-width="2"/>',
  steam: '<circle cx="6" cy="6" r="5.500" fill="#14345d" stroke="none"/><path d="m0 6 5 3 3-4" stroke="#fff" stroke-width="2"/><circle cx="8.500" cy="4" r="2" fill="#fff" stroke="none"/>',
  winrar: '<path d="M1 1h10v3H1z" fill="#c34b47" stroke="none"/><path d="M0 4h12v3H0z" fill="#3788d1" stroke="none"/><path d="M1 7h10v4H1z" fill="#60aa51" stroke="none"/><path d="M4 1h3v10H4z" fill="#d9b55f" stroke="none"/>',
  android: '<circle cx="6" cy="6" r="6" fill="#25bd70" stroke="none"/><path d="M3 7c0-4 6-4 6 0zM3 8h6v2H3z" fill="#b4f5cb" stroke="none"/>',
  wps: '<circle cx="6" cy="6" r="5.500" fill="#245bae" stroke="none"/><path d="m3 3 1 6 2-3 2 3 1-6-3 1z" stroke="#aad6ff"/>',
  acad: '<path d="M0 0h12v12H0z" fill="#cf3b3d" stroke="none"/><path d="M0 0h7v12H0z" fill="#e5aaa7" stroke="none"/><path d="m1 10 4-8h2l4 8H8L6 7l-3 3z" fill="#7d0d14" stroke="none"/>',
  people: '<circle cx="4" cy="5" r="2" stroke="#ddd"/><circle cx="9" cy="3" r="2" stroke="#ddd"/><path d="M1 11c0-5 6-5 6 0M8 6c3 0 3 2 3 4" stroke="#ddd"/>', up: '<path d="m1 8 5-5 5 5" stroke="#ddd" stroke-width="1.500"/>',
  redman: '<circle cx="6" cy="3" r="3" fill="#e9ccb9" stroke="none"/><path d="M1 5h10v6H1z" fill="#de472c" stroke="none"/><path d="M4 7h4v4H4z" fill="#fff" stroke="none"/>',
  wechat: '<circle cx="4" cy="4" r="4" fill="#51c85c" stroke="none"/><circle cx="8" cy="8" r="4" fill="#e7f5e7" stroke="none"/>',
  wifi: '<path d="M1 10 11 1M3 11c0-4 3-7 8-7M6 11c0-2 2-4 5-4" stroke="#ccc" stroke-width="1.300"/>', nod: '<circle cx="6" cy="6" r="6" fill="#dce32a" stroke="none"/><circle cx="6" cy="6" r="2" fill="#284e20"/>',
  speaker: '<path d="M0 4h3l3-3v10L3 8H0zM8 3c2 2 2 4 0 6M10 1c3 3 3 7 0 10" stroke="#ccc" stroke-width="1.200"/>', battery: '<path d="M1 4h10v6H1z" fill="#ddd" stroke="#ddd"/><path d="M0 1v4h4V1" stroke="#ddd"/>',
  note: '<path d="M1 1h10v8H7l-2 2V9H1z" stroke="#ddd"/>'
};

const svg = name => `<svg viewBox="0 0 12 12" fill="none" stroke="#555" stroke-width="1">${icons[name]}</svg>`;

document.querySelectorAll('[data-tools]').forEach(box => {
  box.innerHTML = box.dataset.tools.split(' ').map(token => {
    if (token === '|') return '<i class="sep"></i>';
    const name = token.replace('!', '');
    const on = token === name ? '' : ' on';
    return `<button class="${name}${on}" aria-label="${name}">${svg(name)}</button>`;
  }).join('');
});
document.querySelectorAll('[data-icon]').forEach(box => { box.innerHTML = svg(box.dataset.icon); });
document.querySelectorAll('.modify svg').forEach(el => el.setAttribute('stroke', '#41729f'));
```
